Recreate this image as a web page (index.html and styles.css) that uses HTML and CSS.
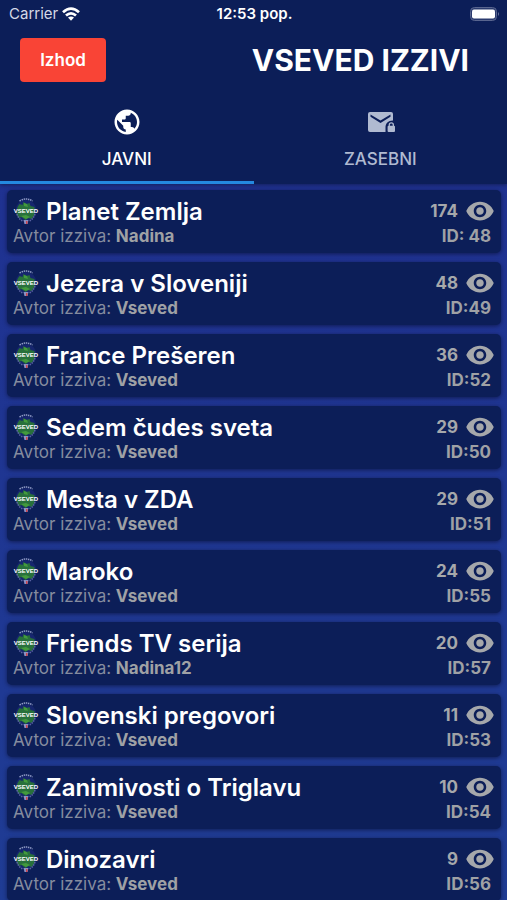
FILE: index.html
```html
<!DOCTYPE html>
<html lang="sl">
<head>
<meta charset="utf-8">
<meta name="viewport" content="width=device-width, initial-scale=1">
<title>Vseved izzivi</title>
<link rel="stylesheet" href="styles.css">
</head>
<body>
<div class="app">
  <header class="header">
    <div class="status">
      <div class="carrier">Carrier
        <svg class="wifi" viewBox="0 0 18 14" aria-hidden="true"><g fill="none" stroke="#fff" stroke-width="2.700"><path d="M1 5.300Q9-2 17 5.300"/><path d="M4 8.600Q9 4 14 8.600"/></g><path fill="#fff" d="M6 10.600Q9 8.300 12 10.600L9 13.800z"/></svg>
      </div>
      <time class="clock">12:53 pop.</time>
      <svg class="battery" viewBox="0 0 30 14" aria-hidden="true"><rect x=".5" y=".5" width="26" height="13" rx="4" fill="#2a3a6e" stroke="#59658f"/><rect x="2" y="2.500" width="23" height="9" rx="2" fill="#fff"/><path d="M28 5q2 2 0 4z" fill="#69749b"/></svg>
    </div>
    <div class="bar">
      <button class="exit" type="button">Izhod</button>
      <h1 class="title">VSEVED IZZIVI</h1>
    </div>
    <nav class="tabs">
      <a class="tab active" href="#javni">
        <svg class="tab-icon" viewBox="0 0 24 24" aria-hidden="true"><path fill="currentColor" d="M12 2C6.480 2 2 6.480 2 12s4.480 10 10 10 10-4.480 10-10S17.520 2 12 2zm-1 17.930c-3.950-.49-7-3.850-7-7.930 0-.62.080-1.210.21-1.790L9 15v1c0 1.100.9 2 2 2v1.930zm6.900-2.540c-.26-.81-1-1.390-1.900-1.390h-1v-3c0-.55-.45-1-1-1H8v-2h2c.55 0 1-.45 1-1V7h2c1.100 0 2-.9 2-2v-.41c2.930 1.190 5 4.060 5 7.410 0 2.080-.8 3.970-2.100 5.390z"/></svg>
        JAVNI
      </a>
      <a class="tab" href="#zasebni">
        <svg class="tab-icon" viewBox="0 0 30 30" aria-hidden="true"><path fill="currentColor" fill-rule="evenodd" d="M5 5h21a2 2 0 0 1 2 2v6.500c-5 0-7.500 3-7.500 7V25H5a2 2 0 0 1-2-2V7a2 2 0 0 1 2-2zM5.500 7.600v2.200L15.500 16l10-6.200V7.600l-10 6z"/><path fill="currentColor" fill-rule="evenodd" d="M23.600 18.700V18a2.700 2.700 0 0 1 5.400 0v.7a1 1 0 0 1 1 1V24a1 1 0 0 1-1 1h-5.400a1 1 0 0 1-1-1v-4.300a1 1 0 0 1 1-1zm1.300 0h2.800V18a1.400 1.400 0 0 0-2.800 0z"/></svg>
        ZASEBNI
      </a>
    </nav>
  </header>
  <main class="list" id="javni"></main>
</div>
<script src="app.js"></script>
</body>
</html>
```

FILE: styles.css
```css
* {
  box-sizing: border-box;
}

body {
  margin: 0;
  font-family: Inter, "Liberation Sans", sans-serif;
  color: #fff;
}

.app {
  display: flex;
  flex-direction: column;
  height: 100vh;
  background: linear-gradient(#1f2f90, #1f3c94);
}

.header {
  flex: none;
  background: #0c1e58;
  box-shadow: 0 1px 4px rgba(0, 0, 0, 0.4);
}

.status {
  display: grid;
  grid-template-columns: 1fr auto 1fr;
  align-items: center;
  height: 27px;
  padding: 0 7px 0 9px;
  font-size: 15px;
}

.carrier {
  display: flex;
  align-items: center;
  gap: 4px;
  color: #d5d9e6;
}

.wifi {
  width: 18px;
  height: 14px;
}

.clock {
  font-weight: 600;
}

.battery {
  justify-self: end;
  width: 30px;
  height: 14px;
}

.bar {
  display: flex;
  align-items: center;
  justify-content: space-between;
  height: 66px;
  padding: 0 38px 0 20px;
}

.exit {
  width: 86px;
  height: 44px;
  border: 0;
  border-radius: 4px;
  background: #f94436;
  color: #fff;
  font: 600 17px Inter, "Liberation Sans", sans-serif;
}

.title {
  margin: 0;
  font-size: 30px;
  font-weight: 700;
}

.tabs {
  display: flex;
}

.tab {
  flex: 1;
  display: flex;
  flex-direction: column;
  align-items: center;
  gap: 10px;
  height: 91px;
  padding-top: 14px;
  border-bottom: 3px solid transparent;
  color: #b0bad1;
  font-size: 17px;
  font-weight: 500;
  line-height: 24px;
  text-decoration: none;
}

.tab.active {
  border-color: #2489e0;
  color: #fff;
}

.tab-icon {
  width: 30px;
  height: 30px;
}

.list {
  flex: 1;
  display: flex;
  flex-direction: column;
  gap: 9px;
  min-height: 0;
  padding: 6px 6px 9px 7px;
  overflow-y: auto;
  scrollbar-width: none;
}

.card {
  flex: none;
  padding: 8px 6px 5px 6px;
  border-radius: 5px;
  background: #0c1e58;
  box-shadow: 0 1px 4px rgba(0, 0, 20, 0.5);
}

.row {
  display: flex;
  align-items: center;
  justify-content: space-between;
  height: 26px;
}

.name {
  display: flex;
  align-items: center;
  gap: 7px;
  margin: 0;
  font-size: 24px;
  font-weight: 600;
}

.logo {
  width: 26px;
  height: 26px;
  overflow: visible;
}

.logo-text {
  fill: #fff;
  font: 700 6px "Liberation Sans", sans-serif;
}

.views {
  display: flex;
  align-items: center;
  gap: 7px;
  color: #a6a8ab;
  font-size: 17px;
  font-weight: 700;
}

.eye {
  width: 30px;
  height: 30px;
}

.meta {
  height: 24px;
  padding-right: 4px;
  color: #858c9f;
  font-size: 17px;
}

.meta b {
  color: #9fa1a5;
  font-weight: 700;
}
```

FILE: app.js
```js
const challenges = [
  ["Planet Zemlja", "Nadina", 174, "ID: 48"],
  ["Jezera v Sloveniji", "Vseved", 48, "ID:49"],
  ["France Prešeren", "Vseved", 36, "ID:52"],
  ["Sedem čudes sveta", "Vseved", 29, "ID:50"],
  ["Mesta v ZDA", "Vseved", 29, "ID:51"],
  ["Maroko", "Vseved", 24, "ID:55"],
  ["Friends TV serija", "Nadina12", 20, "ID:57"],
  ["Slovenski pregovori", "Vseved", 11, "ID:53"],
  ["Zanimivosti o Triglavu", "Vseved", 10, "ID:54"],
  ["Dinozavri", "Vseved", 9, "ID:56"],
];

const logo = `
  <svg class="logo" viewBox="0 0 26 26" aria-hidden="true">
    <circle cx="13" cy="12.500" r="10.500" fill="#16266e"/>
    <path d="M6.500 3Q13-1 19.500 3" fill="none" stroke="#8f9ac6" stroke-width="1.500" stroke-dasharray="1.500 .7"/>
    <path d="M4.500 9l2-3 3 1 1-3 3 2 3-1 1 3 4 1v8l-3 4-3-1-3 2-4-3-3 1-2-4z" fill="#28703c"/>
    <path d="M11 5l3 1 1 3-4-1zM8 18l5-1 4 2-4 2z" fill="#439a3d"/>
    <path d="M4 16Q5.500 21 9.500 23M22 16Q20.500 21 16.500 23" fill="none" stroke="#5c63a3" stroke-width="1.500" stroke-dasharray="1.500 1"/>
    <path d="M10.500 22h5l-1 4h-3z" fill="#8b91c2"/>
    <path d="M13 23h1.500v3H13z" fill="#c8434e"/>
    <text class="logo-text" x="13" y="15" text-anchor="middle">VSEVED</text>
  </svg>`;

const eye = `
  <svg class="eye" viewBox="0 0 24 24" aria-hidden="true">
    <path fill="currentColor" d="M12 4.500C7 4.500 2.730 7.610 1 12c1.730 4.390 6 7.500 11 7.500s9.270-3.110 11-7.500c-1.730-4.390-6-7.500-11-7.500zM12 17c-2.760 0-5-2.240-5-5s2.240-5 5-5 5 2.240 5 5-2.240 5-5 5zm0-8c-1.660 0-3 1.340-3 3s1.340 3 3 3 3-1.340 3-3-1.340-3-3-3z"/>
  </svg>`;

document.getElementById("javni").innerHTML = challenges
  .map(([name, author, views, id]) => `
    <article class="card">
      <div class="row">
        <h2 class="name">${logo}${name}</h2>
        <span class="views">${views}${eye}</span>
      </div>
      <div class="row meta">
        <span>Avtor izziva: <b>${author}</b></span>
        <b>${id}</b>
      </div>
    </article>`)
  .join("");
```
